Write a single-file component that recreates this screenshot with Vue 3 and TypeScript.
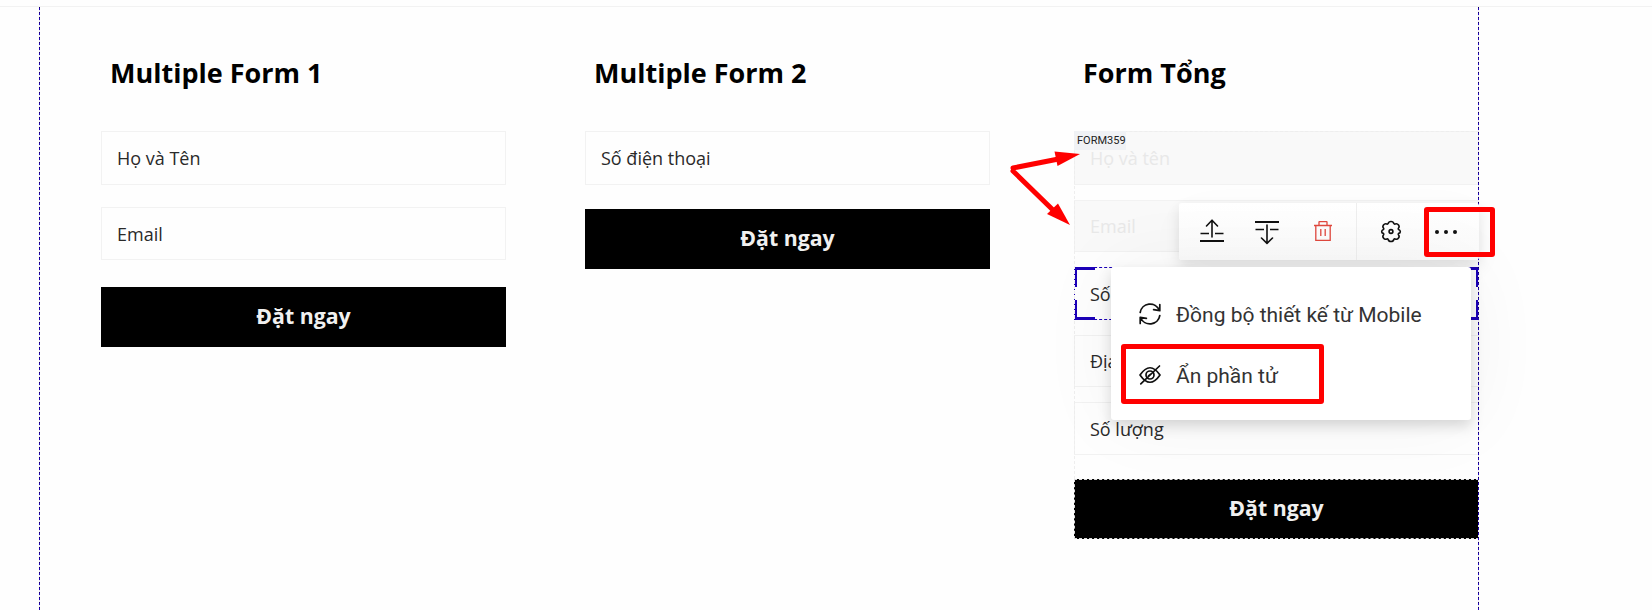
<script setup lang="ts">
interface Field { label: string; kind: string }
interface FormBlock { id: string; title: string; tag?: string; fields: Field[] }

const forms: FormBlock[] = [
  { id: 'one', title: 'Multiple Form 1', fields: [{ label: 'Họ và Tên', kind: 'tall' }, { label: 'Email', kind: 'normal' }] },
  { id: 'two', title: 'Multiple Form 2', fields: [{ label: 'Số điện thoại', kind: 'tall' }] },
  {
    id: 'total',
    title: 'Form Tổng',
    tag: 'FORM359',
    fields: [
      { label: 'Họ và tên', kind: 'tall muted' },
      { label: 'Email', kind: 'muted' },
      { label: 'Số điện thoại', kind: 'selected' },
      { label: 'Địa chỉ', kind: 'normal' },
      { label: 'Số lượng', kind: 'normal' },
    ],
  },
]
</script>

<template>
  <main class="page">
    <div class="topline"></div>
    <div class="stage">
      <section v-for="form in forms" :key="form.id" class="form" :class="form.id">
        <h2>{{ form.title }}</h2>
        <div class="body">
          <span v-if="form.tag" class="tag">{{ form.tag }}</span>
          <div v-for="field in form.fields" :key="field.label" class="field" :class="field.kind">
            <span>{{ field.label }}</span>
            <template v-if="field.kind === 'selected'">
              <i class="corner tl"></i><i class="corner tr"></i><i class="corner bl"></i><i class="corner br"></i>
            </template>
          </div>
          <button class="submit">Đặt ngay</button>
        </div>
      </section>
    </div>
    <div class="guide guide-left"></div>
    <div class="guide guide-right"></div>

    <div class="toolbar">
      <svg class="i-up" width="26" height="26" viewBox="0 0 26 26" fill="none" stroke="#111" stroke-width="1.6">
        <path d="M13 20V3.5M7.5 9L13 3.2L18.500 9" stroke-linejoin="round" stroke-linecap="round" />
        <path d="M1.500 16.500H10M16 16.500H24.500" />
        <path d="M1 24H25" stroke-width="2" />
      </svg>
      <svg class="i-down" width="26" height="26" viewBox="0 0 26 26" fill="none" stroke="#111" stroke-width="1.6">
        <path d="M13 6V23.500M7.500 19L13 24.300L18.500 19" stroke-linejoin="round" stroke-linecap="round" />
        <path d="M1.500 10.500H10M16 10.500H24.500" />
        <path d="M1 3H25" stroke-width="2" />
      </svg>
      <svg class="i-trash" width="22" height="24" viewBox="0 0 22 24" fill="none" stroke="#e0483e" stroke-width="1.300">
        <path d="M2 6.500H20M3.800 6.500V21.300H18.200V6.500M7 6.500V3Q7 2.600 7.500 2.600H14.500Q15 2.600 15 3V6.500M8.800 10V17M13.200 10V17" />
      </svg>
      <i class="sep"></i>
      <svg class="i-gear" width="24" height="24" viewBox="0 0 24 24" fill="none" stroke="#111" stroke-width="1.600">
        <path d="M9.200 4.500C9.800 1.800 14.200 1.800 14.800 4.500Q15.200 5.300 16.200 5C18.900 3.900 21.300 7.300 19.400 9.300Q18.900 10 19.600 10.600C21.900 11.500 21.900 14 19.600 14.400Q18.900 15 19.400 15.700C21.300 17.700 18.900 21.100 16.200 20Q15.200 19.700 14.800 20.500C14.200 23.200 9.800 23.200 9.200 20.500Q8.800 19.700 7.800 20C5.100 21.100 2.700 17.700 4.600 15.700Q5.100 15 4.400 14.400C2.100 14 2.100 11.500 4.400 10.600Q5.100 10 4.600 9.300C2.700 7.300 5.100 3.900 7.800 5Q8.800 5.300 9.200 4.500Z" />
        <circle cx="12" cy="12.500" r="1.900" />
      </svg>
      <svg class="i-more" width="24" height="6" viewBox="0 0 24 6" fill="#111">
        <circle cx="3" cy="3" r="2" /><circle cx="12" cy="3" r="2" /><circle cx="21" cy="3" r="2" />
      </svg>
    </div>

    <div class="menu">
      <div class="item">
        <svg width="24" height="24" viewBox="0 0 24 24" fill="none" stroke="#111" stroke-width="1.700" stroke-linecap="round" stroke-linejoin="round">
          <path d="M2.200 10.500A10 10 0 0 1 21.300 8.200M21.800 2.500V8.700L15.600 7.600" />
          <path d="M21.800 13.500A10 10 0 0 1 2.700 15.800M2.200 21.500V15.300L8.400 16.400" />
        </svg>
        <span>Đồng bộ thiết kế từ Mobile</span>
      </div>
      <div class="item">
        <svg width="24" height="24" viewBox="0 0 24 24" fill="none" stroke="#111" stroke-width="1.700" stroke-linecap="round" stroke-linejoin="round">
          <path d="M2 12Q12-2.500 22 12Q12 26.500 2 12Z" />
          <circle cx="12" cy="12" r="4" /><path d="M2.800 20.800L21.500 3M10.500 13L13 10.800" />
        </svg>
        <span>Ẩn phần tử</span>
      </div>
    </div>

    <div class="mark mark-more"></div>
    <div class="mark mark-hide"></div>
    <svg class="arrows" width="80" height="90" viewBox="0 0 80 90" fill="#f00" stroke="#f00">
      <path d="M13 28L56 19.500M13 31L54 71" stroke-width="5" stroke-linecap="round" fill="none" />
      <path d="M54.500 11.500L80 14L57.500 26Z" stroke="none" />
      <path d="M47 74L58 63.500L70 85Z" stroke="none" />
    </svg>
  </main>
</template>

<style>
body { margin: 0; background: #fefefe; }
</style>

<style scoped>
* { box-sizing: border-box; }
.page { position: relative; width: 1652px; height: 610px; overflow: hidden; background: #fefefe; font-family: "Open Sans", "Noto Sans", sans-serif; color: #2a2a2a; }
.topline { height: 7px; border-bottom: 1px solid #f2f2f2; }
.stage { margin-left: 39px; width: 1440px; height: 603px; padding-left: 62px; display: flex; align-items: flex-start; }
.form { width: 405px; flex: none; }
.form.two { margin-left: 79px; }
.form.total { margin-left: 84px; }
h2 { margin: 0; height: 124px; padding: 47px 0 0 9px; font-size: 27px; line-height: 38px; font-weight: 700; color: #000; white-space: nowrap; }
.body { position: relative; display: flex; flex-direction: column; }
.field { position: relative; height: 53px; border: 1px solid #f2f2f2; padding-left: 15px; display: flex; align-items: center; font-size: 18px; font-weight: 400; }
.field.tall { height: 54px; }
.one .field + .field { margin-top: 22px; }
.submit { height: 60px; padding: 0 0 4px; border: 0; background: #000; color: #f0f0f0; font: 700 21.3px "Open Sans", sans-serif; }
.one .submit { margin-top: 27px; }
.two .submit { margin-top: 24px; }
.total .body::before { content: ""; position: absolute; inset: 0; border: 1px dashed #eee; z-index: 1; }
.total .field + .field { margin-top: 15px; height: 52px; }
.total .field.selected { height: 53px; border: 1px dashed #1c00b8; }
.total .field:nth-of-type(5) { height: 53px; }
.field.muted { background: #f9f9f9; color: #e8e8e8; }
.total .submit { margin-top: 24px; border: 1px dashed #ddd; z-index: 2; }
.tag { position: absolute; left: 0; top: 0; z-index: 3; width: 52px; height: 19px; padding-left: 3px; background: #f0f2f5; font: 11px/20px Roboto, sans-serif; color: #222; }
.corner { position: absolute; width: 20px; height: 20px; border: 0 solid #1c00b8; z-index: 2; }
.tl { left: 0; top: -1px; border-top-width: 3px; border-left-width: 2px; }
.tr { right: -1px; top: -1px; border-top-width: 3px; border-right-width: 3px; }
.bl { left: 0; bottom: -1px; border-bottom-width: 3px; border-left-width: 2px; }
.br { right: -1px; bottom: -1px; border-bottom-width: 3px; border-right-width: 3px; }
.guide { position: absolute; top: 7px; width: 1px; height: 603px; background: repeating-linear-gradient(#12005a 0 1px, #1c00b8 1px 3px, #e8e6f6 3px 5px); z-index: 3; }
.guide-left { left: 39px; }
.guide-right { left: 1478px; }
.toolbar { position: absolute; z-index: 4; left: 1179px; top: 203px; width: 300px; height: 57px; border-radius: 3px; background: linear-gradient(#fff, #fafafa); display: flex; align-items: center; box-shadow: 0 6px 14px rgba(0,0,0,.11), 0 10px 50px rgba(0,0,0,.025); }
.i-up { margin-left: 20px; margin-top: -3px; }
.i-down { margin-left: 29px; margin-top: 0; }
.i-trash { margin-left: 32px; margin-top: -1px; }
.sep { margin-left: 22px; width: 1px; height: 57px; background: #eee; }
.i-gear { margin-left: 22px; margin-top: -2px; }
.i-more { margin-left: 31px; }
.menu { position: absolute; z-index: 5; left: 1111px; top: 267px; width: 360px; height: 153px; padding: 17px 27px; border-radius: 3px; background: #fff; box-shadow: 0 6px 14px rgba(0,0,0,.15), 0 0 80px rgba(0,0,0,.05); }
.item { height: 61px; display: flex; align-items: center; gap: 14px; font: 21px Roboto, sans-serif; color: #333; white-space: nowrap; }
.item svg { margin-top: -1px; }
.mark { position: absolute; z-index: 6; border: 5px solid #f00; border-radius: 3px; }
.mark-more { left: 1424px; top: 207px; width: 71px; height: 50px; }
.mark-hide { left: 1121px; top: 344px; width: 203px; height: 60px; }
.arrows { position: absolute; z-index: 6; left: 1000px; top: 140px; }
</style>
